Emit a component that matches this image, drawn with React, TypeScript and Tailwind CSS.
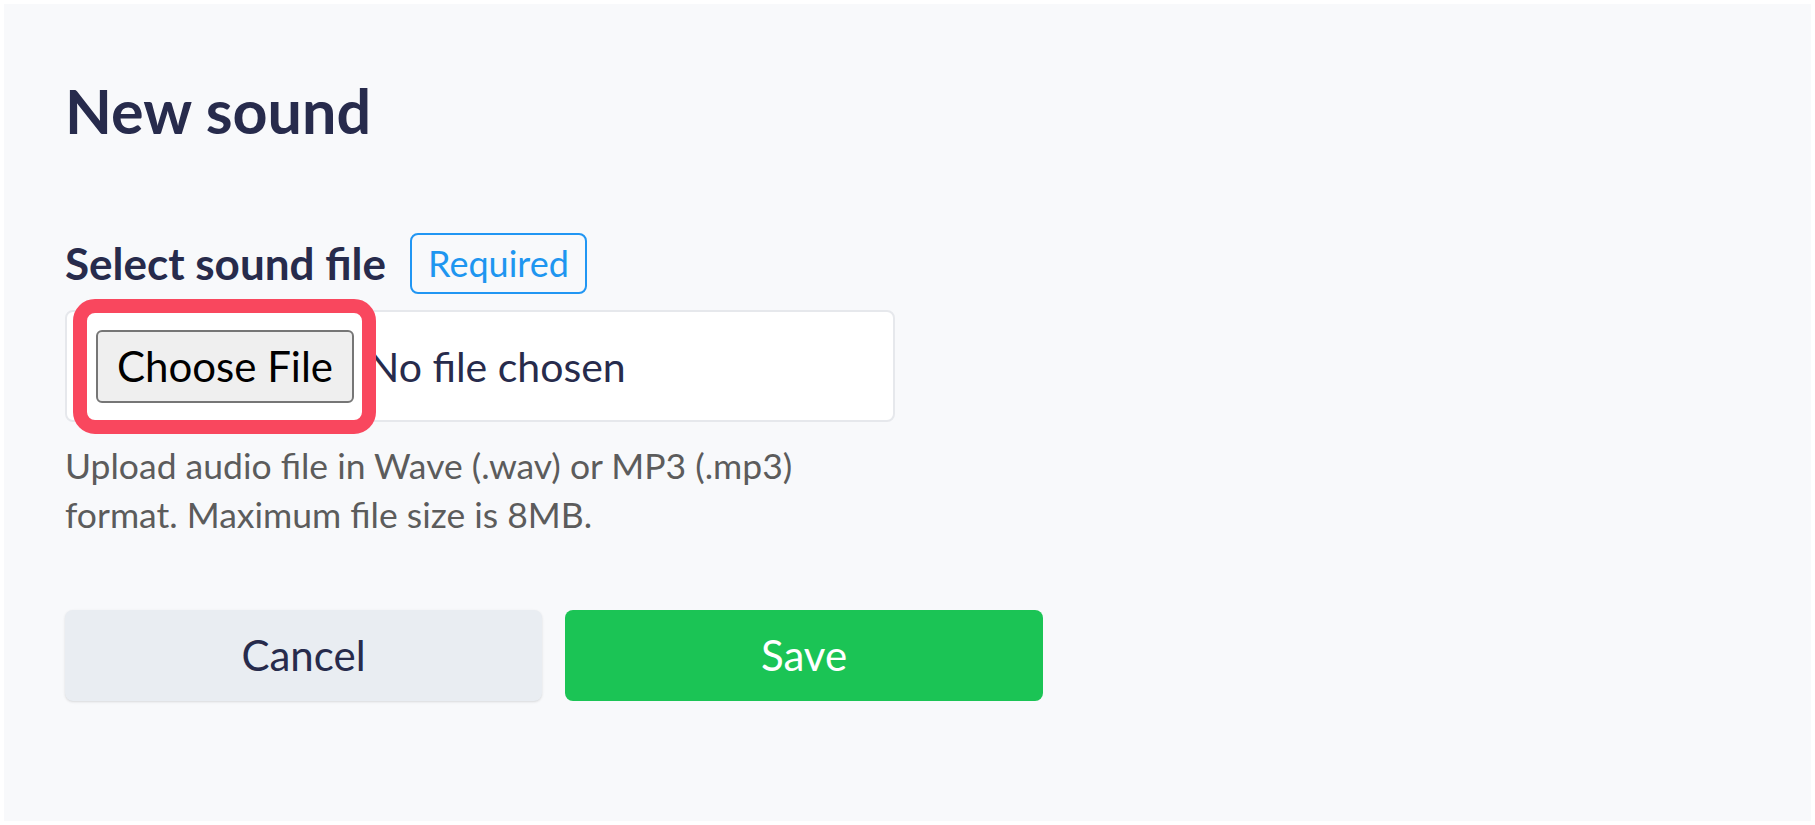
import React from 'react';

const font = { fontFamily: 'Lato, "Noto Sans", sans-serif' };

export default function App() {
  return (
    <div className="h-screen w-full bg-white p-[4px]" style={font}>
      <div className="h-full w-full bg-[#f8f9fb] pl-[61px] pt-[71px]">
        <h1 className="text-[61px] font-bold leading-[72px] text-[#272b4c]">New sound</h1>

        <div className="mt-[86px] flex h-[60px] items-center gap-[24px]">
          <label className="text-[44px] font-bold leading-[52px] text-[#272b4c]">Select sound file</label>
          <span className="flex h-[61px] items-center rounded-[8px] border-2 border-[#2196f3] px-[16px] text-[36px] leading-none text-[#1e96f0]">
            Required
          </span>
        </div>

        <div className="relative mt-[17px] flex h-[112px] w-[830px] items-center rounded-[8px] border-2 border-[#e6e8ec] bg-white pl-[29px]">
          <button className="flex h-[73px] w-[258px] items-center justify-center rounded-[6px] border-2 border-[#767676] bg-[#efefef] text-[42px] leading-none text-black">
            Choose File
          </button>
          <span className="ml-[14px] text-[41px] leading-none text-[#272b4c]">No file chosen</span>
          <div className="pointer-events-none absolute left-[6px] top-[-13px] h-[135px] w-[303px] rounded-[22px] border-[14px] border-[#f9475e]" />
        </div>

        <p className="mt-[19px] text-[35.5px] leading-[49px] text-[#5c5c5c]">
          Upload audio file in Wave (.wav) or MP3 (.mp3)
          <br />
          format. Maximum file size is 8MB.
        </p>

        <div className="mt-[71px] flex gap-[23px]">
          <button className="h-[91px] w-[477px] rounded-[8px] bg-[#e9edf2] text-[42px] text-[#272b4c] shadow-sm">
            Cancel
          </button>
          <button className="h-[91px] w-[478px] rounded-[8px] bg-[#1bc455] text-[42px] text-white">
            Save
          </button>
        </div>
      </div>
    </div>
  );
}
